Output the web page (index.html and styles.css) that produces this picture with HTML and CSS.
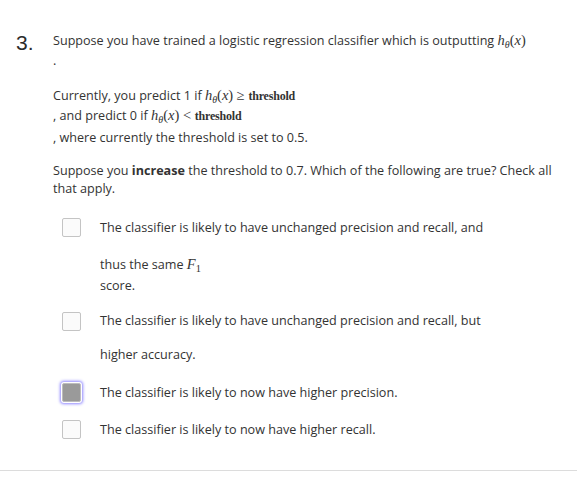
FILE: index.html
```html
<!DOCTYPE html>
<html>
<head>
<meta charset="utf-8">
<link rel="stylesheet" href="styles.css">
</head>
<body>
<div class="question">
  <div class="qnum">3.</div>
  <div class="qbody">
    <div class="line l1">Suppose you have trained a logistic regression classifier which is outputting <span class="math"><i>h</i><sub><i>θ</i></sub>(<i>x</i>)</span></div>
    <div class="line l2">.</div>
    <div class="line l3">Currently, you predict 1 if <span class="math"><i>h</i><sub><i>θ</i></sub>(<i>x</i>) ≥ <span class="txt">threshold</span></span></div>
    <div class="line l4">, and predict 0 if <span class="math"><i>h</i><sub><i>θ</i></sub>(<i>x</i>) &lt; <span class="txt">threshold</span></span></div>
    <div class="line l5">, where currently the threshold is set to 0.5.</div>
    <div class="para">Suppose you <b>increase</b> the threshold to 0.7. Which of the following are true? Check all that apply.</div>
    <div class="options">
      <div class="opt o1">
        <span class="box"></span>
        <div class="otext">
          <div class="ol first">The classifier is likely to have unchanged precision and recall, and</div>
          <div class="ol thus">thus the same <span class="math"><i>F</i><sub class="one">1</sub></span></div>
          <div class="ol score">score.</div>
        </div>
      </div>
      <div class="opt o2">
        <span class="box"></span>
        <div class="otext">
          <div class="ol first">The classifier is likely to have unchanged precision and recall, but</div>
          <div class="ol higher">higher accuracy.</div>
        </div>
      </div>
      <div class="opt o3">
        <span class="box checked"></span>
        <div class="otext">
          <div class="ol first">The classifier is likely to now have higher precision.</div>
        </div>
      </div>
      <div class="opt o4">
        <span class="box"></span>
        <div class="otext">
          <div class="ol first">The classifier is likely to now have higher recall.</div>
        </div>
      </div>
    </div>
  </div>
</div>
<div class="rule"></div>
</body>
</html>
```
FILE: styles.css
```css
html, body {
  margin: 0;
  padding: 0;
  background: #fff;
}
body {
  font-family: "Open Sans", "Noto Sans", sans-serif;
  font-size: 12.6px;
  color: #333;
  width: 577px;
}
.question {
  display: flex;
  padding-top: 31px;
}
.qnum {
  width: 37px;
  padding-left: 16px;
  font-family: "Liberation Sans", Arial, sans-serif;
  font-size: 21px;
  line-height: 20px;
  color: #2b2b2b;
  padding-top: 2px;
}
.qbody {
  flex: 1;
}
.line {
  line-height: 20px;
  height: 20px;
  white-space: nowrap;
}
.l2 { height: 20px; }
.l3 { margin-top: 15px; }
.l5 { line-height: 24px; height: 24px; }
.math {
  font-family: "Liberation Serif", "Times New Roman", serif;
  font-size: 14.5px;
  line-height: 1;
}
.math i { font-style: italic; }
.math sub {
  font-size: 10px;
  vertical-align: -3px;
  line-height: 0;
}
.math sub.one {
  font-style: normal;
  font-size: 10.5px;
}
.txt {
  font-size: 12px;
  font-weight: bold;
  letter-spacing: -0.2px;
}
.para {
  margin-top: 12px;
  line-height: 18px;
  width: 510px;
}
.para b { font-weight: bold; }
.options {
  margin-top: 20px;
  padding-left: 9px;
}
.opt {
  display: flex;
  align-items: flex-start;
}
.box {
  flex: none;
  width: 17px;
  height: 17px;
  border: 1px solid #c4c4c4;
  border-radius: 2px;
  background: #fbfbfb;
  margin-right: 19px;
}
.box.checked {
  background: #9a9a9a;
  border-color: #bdbdbd;
  box-shadow: 0 0 0 1px #fff, 0 0 3px 2px #8e86ff;
}
.otext { flex: 1; }
.ol {
  line-height: 20px;
  height: 20px;
  white-space: nowrap;
}
.thus { margin-top: 17px; }
.score { margin-top: 1px; }
.o2 { margin-top: 15px; }
.o2 .box { margin-top: 1px; }
.higher { margin-top: 14px; }
.o3 { margin-top: 18px; }
.o4 { margin-top: 17px; }
.rule {
  margin-top: 30px;
  height: 0;
  border-top: 1px solid #dcdcdc;
}
```
